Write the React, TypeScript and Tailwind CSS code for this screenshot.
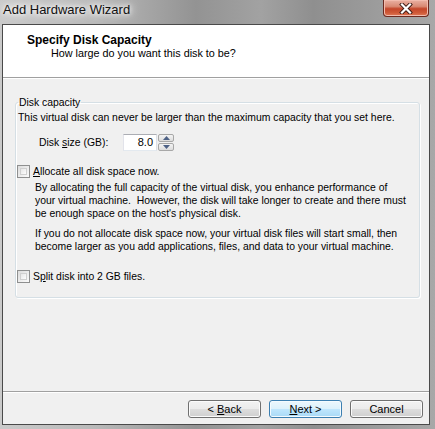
import React from "react";

const font = { fontFamily: '"Liberation Sans", Arial, sans-serif' };

function Btn({ children, def }: { children: React.ReactNode; def?: boolean }) {
  return (
    <div
      className={
        "w-[73px] h-[18px] rounded-[3px] border flex items-center justify-center text-[11px] text-black whitespace-pre " +
        (def
          ? "border-[#3c7fb1] bg-[linear-gradient(180deg,#ecf7fd_0%,#dcf1fc_50%,#bfe6fd_51%,#a9daf6_100%)] shadow-[inset_0_0_0_1px_#f4fbff]"
          : "border-[#707070] bg-[linear-gradient(180deg,#f2f2f2_0%,#ebebeb_50%,#dddddd_51%,#cfcfcf_100%)] shadow-[inset_0_0_0_1px_#fbfbfb]")
      }
    >
      {children}
    </div>
  );
}

function Check() {
  return (
    <div className="w-[13px] h-[13px] border border-[#8e8f8f] bg-[linear-gradient(135deg,#dcdcdc,#fbfbfb)] p-[2px] shrink-0">
      <div className="w-full h-full border border-[#d0d0d0] bg-[linear-gradient(135deg,#e6e6e6,#fdfdfd)]" />
    </div>
  );
}

export default function App() {
  return (
    <div
      className="w-[435px] h-[429px] flex flex-col bg-[linear-gradient(90deg,#cacaca_0%,#b9b9b9_22%,#939393_45%,#a2a2a2_60%,#8f8f8f_72%,#a8a8a8_100%)]"
      style={font}
    >
      {/* title bar */}
      <div className="h-[24px] shrink-0 flex items-start">
        <div className="pl-[3px] pt-[2px] text-[13px] leading-[16px] text-[#111] [text-shadow:0_0_8px_#fff,0_0_4px_#fff,0_0_12px_#fff]">
          Add Hardware Wizard
        </div>
        <div className="ml-auto mr-[6px] w-[46px] h-[17px] rounded-b-[4px] border border-t-0 border-[#6b2a20] bg-[linear-gradient(180deg,#eab1a3_0%,#d98a74_40%,#c4462a_55%,#cf5a38_80%,#e07a58_100%)] shadow-[inset_0_0_0_1px_#f2bcae] flex items-center justify-center">
          <svg width="14" height="11" viewBox="0 0 14 11">
            <path d="M3 1.5 L11 9.5 M11 1.5 L3 9.5" stroke="#3b1a14" strokeWidth="4" strokeLinecap="square" />
            <path d="M3 1.5 L11 9.5 M11 1.5 L3 9.5" stroke="#ffffff" strokeWidth="2.2" strokeLinecap="square" />
          </svg>
        </div>
      </div>

      {/* client */}
      <div className="ml-[2px] w-[428px] h-[401px] border border-[#4a4a4a] bg-[#f0f0f0] flex flex-col text-[10.4px] leading-[13px] text-black whitespace-nowrap">
        {/* header */}
        <div className="h-[53px] bg-white pt-[9px] border-b border-[#a0a0a0] shrink-0">
          <div className="pl-[24px] font-bold text-[12px] leading-[13px]">Specify Disk Capacity</div>
          <div className="pl-[48px] text-[10.8px]">How large do you want this disk to be?</div>
        </div>
        <div className="h-px bg-white shrink-0" />

        {/* body */}
        <div className="flex-1 pt-[17px] pl-[12px] pr-[9px]">
          <fieldset className="border border-[#d5dfe5] rounded-[3px] pl-[1px] pr-[4px] pb-[14px] shadow-[inset_1px_1px_0_#fff,1px_1px_0_#fff]">
            <legend className="px-[1px] ml-[1px]">Disk capacity</legend>
            <div className="pl-[1px] pt-[2px]">
              This virtual disk can never be larger than the maximum capacity that you set here.
            </div>
            <div className="mt-[10px] flex items-center h-[17px]">
              <div className="pl-[22px] w-[106px]">
                Disk <span className="underline">s</span>ize (GB):
              </div>
              <div className="w-[34px] h-[17px] bg-white border border-[#abadb3] border-b-[#e3e9ef] border-r-[#dbdfe6] border-l-[#e2e3ea] flex items-center justify-end pr-[3px] text-[11px]">
                8.0
              </div>
              <div className="w-[17px] h-[17px] flex flex-col gap-px pl-px">
                <div className="flex-1 border border-[#a8a8a8] rounded-[2px] bg-[linear-gradient(180deg,#f4f4f4,#dcdcdc)] flex items-center justify-center">
                  <svg width="7" height="4" viewBox="0 0 7 4"><path d="M0 4 L3.5 0 L7 4 Z" fill="#4d6185" /></svg>
                </div>
                <div className="flex-1 border border-[#a8a8a8] rounded-[2px] bg-[linear-gradient(180deg,#f4f4f4,#dcdcdc)] flex items-center justify-center">
                  <svg width="7" height="4" viewBox="0 0 7 4"><path d="M0 0 L3.5 4 L7 0 Z" fill="#4d6185" /></svg>
                </div>
              </div>
            </div>

            <div className="mt-[14px] flex items-center gap-[3px]">
              <Check />
              <div>
                <span className="underline">A</span>llocate all disk space now.
              </div>
            </div>
            <div className="mt-[3px] pl-[18px]">
              <div>By allocating the full capacity of the virtual disk, you enhance performance of</div>
              <div>your virtual machine.&nbsp; However, the disk will take longer to create and there must</div>
              <div>be enough space on the host's physical disk.</div>
            </div>
            <div className="mt-[7px] pl-[18px]">
              <div>If you do not allocate disk space now, your virtual disk files will start small, then</div>
              <div>become larger as you add applications, files, and data to your virtual machine.</div>
            </div>
            <div className="mt-[17px] flex items-center gap-[3px]">
              <Check />
              <div>
                S<span className="underline">p</span>lit disk into 2 GB files.
              </div>
            </div>
          </fieldset>
        </div>

        {/* footer */}
        <div className="h-px bg-[#a0a0a0] shrink-0" />
        <div className="h-px bg-white shrink-0" />
        <div className="shrink-0 pt-[7px] pb-[6px] pr-[6px] flex justify-end gap-[8px]">
          <Btn>
            {"< "}<span className="underline">B</span>ack
          </Btn>
          <Btn def>
            <span className="underline">N</span>{"ext >"}
          </Btn>
          <Btn>Cancel</Btn>
        </div>
      </div>
    </div>
  );
}
